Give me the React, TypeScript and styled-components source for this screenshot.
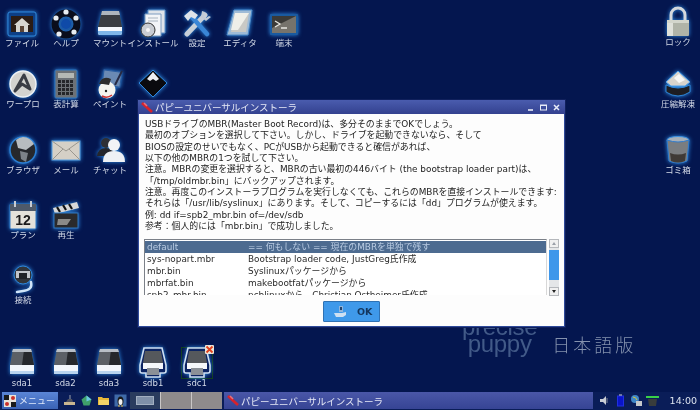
import React from "react";
import styled, { createGlobalStyle } from "styled-components";

const GlobalStyle = createGlobalStyle`
  html, body {
    margin: 0;
    padding: 0;
    background: #04164f;
  }
  body {
    font-family: "DejaVu Sans", "Noto Sans CJK JP", sans-serif;
  }
`;

// the reference is a soft, recompressed capture
const Screen = styled.div`
  width: 700px;
  height: 410px;
  overflow: hidden;
  display: flex;
  flex-direction: column;
  background: #04164f;
  filter: blur(0.35px);
`;

const Canvas = styled.div`
  position: relative;
  flex: 1;
`;

const IconSlot = styled.div<{ $cx: number; $top: number }>`
  position: absolute;
  left: ${(p) => p.$cx - 40}px;
  top: ${(p) => p.$top}px;
  width: 80px;
  display: flex;
  flex-direction: column;
  align-items: center;
`;

const IconArt = styled.svg`
  display: block;
  width: 32px;
  height: 32px;
  filter: drop-shadow(0 0 2px #2f8fe8);
`;

const IconLabel = styled.span`
  margin-top: -2px;
  font-size: 8.5px;
  line-height: 12px;
  color: #d5dbe8;
  white-space: nowrap;
`;

const Watermark = styled.div`
  position: absolute;
  left: 462px;
  top: 318px;
  display: flex;
  align-items: flex-end;
  gap: 15px;
`;

const PuppyWords = styled.div`
  display: flex;
  flex-direction: column;
  align-items: center;
  font-family: "Liberation Sans", sans-serif;
  font-size: 24px;
  line-height: 17px;
  color: #425a88;
`;

const PuppyLine = styled.span`
  letter-spacing: -0.3px;
`;

const JapaneseEdition = styled.div`
  font-family: "Noto Sans CJK JP", sans-serif;
  font-weight: 300;
  font-size: 18px;
  line-height: 16px;
  letter-spacing: 3px;
  color: #8592ae;
`;

const Installer = styled.section`
  position: absolute;
  left: 138px;
  top: 100px;
  width: 427px;
  height: 227px;
  display: flex;
  flex-direction: column;
  box-shadow: 0 0 0 1px #10205c;
`;

const TitleBar = styled.header`
  height: 14px;
  flex: none;
  display: flex;
  align-items: center;
  padding: 0 5px 0 3px;
  background: linear-gradient(#4a5cae, #33418f);
  color: #e6e9f6;
  font-size: 9.5px;
`;

const TitleText = styled.span`
  flex: 1;
  margin-left: 1px;
  white-space: nowrap;
`;

const WindowButtons = styled.div`
  display: flex;
  align-items: center;
  gap: 6px;
`;

const WindowBody = styled.div`
  flex: 1;
  display: flex;
  flex-direction: column;
  background: #fdfdfd;
  padding: 5px 5px 5px 6px;
  border: solid #2e4a9a;
  border-width: 0 1px 1px;
  box-sizing: border-box;
  min-height: 0;
`;

const Message = styled.div`
  height: 118px;
  flex: none;
  color: #222;
  font-size: 8.9px;
  line-height: 11.35px;
  white-space: nowrap;
`;

const ListRow = styled.div`
  display: flex;
  gap: 2px;
  margin: 2px 0 0 -1px;
  height: 56px;
  flex: none;
`;

const ListFrame = styled.div`
  flex: 1;
  border: 1px solid #7b8088;
  border-right-color: #d8d8d8;
  border-bottom: none;
  overflow: hidden;
  background: #fff;
  padding-top: 1px;
`;

const ListItem = styled.div<{ $selected?: boolean }>`
  display: grid;
  grid-template-columns: 101px 1fr;
  height: 12px;
  line-height: 12px;
  padding-left: 2px;
  font-size: 8.9px;
  white-space: nowrap;
  color: ${(p) => (p.$selected ? "#b9cbe2" : "#2b2b2b")};
  background: ${(p) => (p.$selected ? "#4d6b90" : "transparent")};
`;

const Scrollbar = styled.div`
  width: 10px;
  height: 57px;
  flex: none;
  display: flex;
  flex-direction: column;
  background: #e4e6e8;
`;

const ScrollArrow = styled.div<{ $up?: boolean }>`
  height: 9px;
  flex: none;
  display: flex;
  align-items: center;
  justify-content: center;
  background: #f0f0f0;
  border: 1px solid #b5b8bc;
  box-sizing: border-box;
  &::before {
    content: "";
    border-left: 2.5px solid transparent;
    border-right: 2.5px solid transparent;
    ${(p) =>
      p.$up
        ? "border-bottom: 3px solid #9aa0a8;"
        : "border-top: 3px solid #222;"}
  }
`;

const ScrollThumb = styled.div`
  height: 30px;
  margin-top: 2px;
  flex: none;
  background: #3f97ea;
`;

const ScrollGap = styled.div`
  flex: 1;
`;

const ButtonRow = styled.div`
  display: flex;
  justify-content: center;
  padding-top: 6px;
  padding-right: 1px;
`;

const OkButton = styled.div`
  width: 57px;
  height: 21px;
  box-sizing: border-box;
  display: flex;
  align-items: center;
  gap: 10px;
  padding-left: 9px;
  background: #3f99ea;
  border: 1px solid #2f72b4;
  border-radius: 1px;
  color: #13365e;
  font-size: 9.5px;
  font-weight: 700;
`;

const Taskbar = styled.footer`
  height: 18px;
  flex: none;
  display: flex;
  align-items: stretch;
  background: #0a1d58;
  padding: 0 0 1px 2px;
  box-sizing: border-box;
`;

const MenuButton = styled.div`
  width: 56px;
  display: flex;
  align-items: center;
  gap: 2px;
  padding-left: 1px;
  box-sizing: border-box;
  background: linear-gradient(#5a85d6, #3a62b4);
  color: #dfe8fa;
  font-size: 9px;
  white-space: nowrap;
`;

const QuickLaunch = styled.div`
  width: 72px;
  display: flex;
  align-items: center;
  justify-content: space-around;
  padding: 0 1px 0 3px;
  box-sizing: border-box;
`;

const TaskIcon = styled.svg`
  display: block;
  width: 13px;
  height: 13px;
`;

const Pager = styled.div`
  display: flex;
  width: 92px;
`;

const PagerSlot = styled.div<{ $active?: boolean }>`
  flex: 1;
  display: flex;
  align-items: center;
  justify-content: center;
  background: ${(p) => (p.$active ? "#2a3c5e" : "#8f8b8c")};
  border-left: ${(p) => (p.$active ? "none" : "1px solid #c9c6c6")};
  &::before {
    content: "";
    display: ${(p) => (p.$active ? "block" : "none")};
    width: 16px;
    height: 7px;
    background: #7f90a8;
    border: 1px solid #a2afc0;
  }
`;

const TaskButton = styled.div`
  width: 369px;
  margin-left: 2px;
  display: flex;
  align-items: center;
  gap: 1px;
  padding-left: 3px;
  box-sizing: border-box;
  background: linear-gradient(#4a57a8, #364494);
  color: #e6e9f6;
  font-size: 9.5px;
  white-space: nowrap;
`;

const Tray = styled.div`
  flex: 1;
  display: flex;
  align-items: center;
  gap: 3px;
  padding-left: 5px;
`;

const Clock = styled.span`
  margin-left: auto;
  margin-right: 3px;
  color: #dbe2ee;
  font-size: 9.5px;
  font-weight: 500;
`;

const Drive = ({ outlined }: { outlined?: boolean }) =>
  outlined ? (
    <>
      <path d="M7 1h18l4 17v6q0 2-2 2h-4v4H9v-4H5q-2 0-2-2v-6z" fill="#0b2362" stroke="#cfe0f2" strokeWidth="1.6" />
      <path d="M8 4h16l2 12H6z" fill="#55585c" />
      <rect x="6" y="16" width="20" height="6" fill="#f5f7fa" />
      <rect x="10" y="21" width="12" height="7" fill="#8b9097" />
    </>
  ) : (
    <>
      <path d="M7 2h18l3 16H4z" fill="#5c6066" />
      <path d="M18 3h7l3 15h-12z" fill="#26282c" />
      <path d="M7 2h18l1 3H6z" fill="#b8bec6" />
      <path d="M4 18h24v8q0 1-1 1H5q-1 0-1-1z" fill="#f3f6fb" />
      <path d="M4 24h24v2q0 1-1 1H5q-1 0-1-1z" fill="#b9d4ee" />
    </>
  );

const arts: Record<string, React.ReactNode> = {
  file: (
    <>
      <rect x="2" y="5" width="28" height="24" rx="2" fill="#0d3f86" stroke="#2f86d8" />
      <rect x="5" y="9" width="22" height="16" fill="#2b1d16" />
      <path d="M16 11l8 7h-2v7H10v-7H8z" fill="#d7d5d0" />
      <rect x="14" y="19" width="4" height="6" fill="#5a4436" />
    </>
  ),
  help: (
    <>
      <circle cx="16" cy="17" r="11" fill="none" stroke="#0a0d1c" strokeWidth="7" />
      <circle cx="16" cy="17" r="5" fill="#0f4aa8" />
      {[[16, 5], [26, 11], [24, 25], [9, 27], [6, 11]].map(([x, y]) => (
        <circle key={`${x}-${y}`} cx={x} cy={y} r="2.6" fill="#e8edf2" />
      ))}
    </>
  ),
  mount: (
    <>
      <path d="M8 4h17l3 16H4z" fill="#3a3d42" />
      <path d="M8 4h17l1 4H7z" fill="#aeb5bd" />
      <path d="M4 20h24v6q0 2-2 2H6q-2 0-2-2z" fill="#f4f7fb" />
      <path d="M4 24h24v2q0 2-2 2H6q-2 0-2-2z" fill="#7fb6e8" />
    </>
  ),
  install: (
    <>
      <path d="M11 3h17v23H11z" fill="#dfe4ea" stroke="#5f8fc4" />
      <path d="M8 7h16v22H8z" fill="#f3f5f8" stroke="#7c9cc0" />
      <path d="M11 11h10M11 14h10" stroke="#a9b4c0" />
      <circle cx="11" cy="23" r="7" fill="#c8ccd2" stroke="#333" />
      <circle cx="11" cy="23" r="2" fill="#f7f7f7" />
    </>
  ),
  settings: (
    <>
      <path d="M6 27L24 8" stroke="#c8d0d8" strokeWidth="5" strokeLinecap="round" />
      <path d="M26 27L11 10" stroke="#3a86d6" strokeWidth="4.5" strokeLinecap="round" />
      <path d="M3 9l7-6 7 5-3 4-4-2-3 4z" fill="#dfe4e9" />
      <path d="M21 4l-1 6 5 4 5-4-2-1-3 2-2-2 1-4z" fill="#c3ccd6" />
    </>
  ),
  editor: (
    <>
      <path d="M10 3h18l-4 25H3z" fill="#9fbbd6" stroke="#4c8ac8" />
      <path d="M11 6h14l-3 19H7z" fill="#c9c9c5" />
      <path d="M11 6h14L14 23H7z" fill="#efefe9" />
    </>
  ),
  terminal: (
    <>
      <rect x="2" y="7" width="28" height="21" rx="1" fill="#1a5aa0" />
      <rect x="4" y="9" width="24" height="17" fill="#76736c" />
      <path d="M4 9h24L4 21z" fill="#3b3a37" />
      <path d="M7 14l5 3-5 3M13 21h6" stroke="#e6e6e0" strokeWidth="1.3" fill="none" />
    </>
  ),
  word: (
    <>
      <circle cx="16" cy="16" r="13" fill="#d3d3cf" stroke="#eef1f4" strokeWidth="1.5" />
      <path d="M8 23L17 7l6 14-8-5z" fill="none" stroke="#3a3d44" strokeWidth="3" strokeLinejoin="round" />
    </>
  ),
  calc: (
    <>
      <rect x="5" y="2" width="22" height="28" rx="1" fill="#6c7176" stroke="#2f76c0" />
      <rect x="8" y="5" width="16" height="5" fill="#b4b8b4" />
      {[12, 16, 20, 24].flatMap((y) =>
        [8, 12, 16, 20].map((x) => <rect key={`${x}${y}`} x={x} y={y} width="3" height="3" fill="#24262a" />)
      )}
    </>
  ),
  paint: (
    <>
      <rect x="9" y="3" width="18" height="15" fill="#6a8ab4" stroke="#2a5ca0" transform="rotate(8 18 10)" />
      <path d="M28 3L21 17" stroke="#262a44" strokeWidth="2" />
      <circle cx="13" cy="22" r="8.5" fill="#f4f4ef" />
      <path d="M5 16q3-9 12-5l-2 6-6-1z" fill="#2d2d2d" />
      <circle cx="12" cy="23" r="1.2" fill="#222" />
      <path d="M8 28q5 3 10-1" stroke="#c33" strokeWidth="1.5" fill="none" />
    </>
  ),
  inkscape: (
    <>
      <path d="M16 2L30 15 16 29 2 15z" fill="#0a0a0e" stroke="#2d86dc" />
      <path d="M16 4l6 7-3 2-3-2-3 2-3-2z" fill="#eef0f2" />
    </>
  ),
  browser: (
    <>
      <circle cx="16" cy="16" r="13" fill="#26282c" stroke="#2c7fd4" strokeWidth="1.5" />
      <path d="M16 3a13 13 0 0 1 11 7l-8 6-8-2-2-8a13 13 0 0 1 7-3z" fill="#b7bcc0" />
      <path d="M13 17l8 2-2 9-5-3z" fill="#7d8288" />
    </>
  ),
  mail: (
    <>
      <rect x="2" y="7" width="28" height="19" fill="#d5d0c6" stroke="#5a9ede" />
      <path d="M2 7l14 10L30 7M2 26l11-11M30 26L19 15" stroke="#9a978f" fill="none" />
    </>
  ),
  chat: (
    <>
      <circle cx="12" cy="9" r="5" fill="#2e3036" />
      <path d="M3 22q1-8 9-8t8 8z" fill="#24262c" />
      <circle cx="20" cy="11" r="6" fill="#f2f4f7" />
      <path d="M9 28q0-11 11-11t11 11z" fill="#eef1f5" />
    </>
  ),
  plan: (
    <>
      <rect x="3" y="5" width="26" height="25" rx="1" fill="#e4e2da" stroke="#2f76c0" />
      <rect x="3" y="5" width="26" height="7" fill="#4e5a6a" />
      <path d="M8 2v6M24 2v6" stroke="#c6ccd4" strokeWidth="2" />
      <text x="16" y="26" textAnchor="middle" fontSize="14" fontWeight="700" fontFamily="Liberation Sans, sans-serif" fill="#1a1a1a">12</text>
    </>
  ),
  play: (
    <>
      <path d="M3 9L27 3l2 6L5 15z" fill="#d8d8d8" />
      <path d="M7 8l3 5M13 6l3 5M19 5l3 5" stroke="#111" strokeWidth="2.2" />
      <rect x="4" y="14" width="24" height="15" fill="#2a2a2c" stroke="#2f76c0" />
      <path d="M8 20h13l-4 6H7z" fill="#8a8a88" />
    </>
  ),
  connect: (
    <>
      <circle cx="16" cy="11" r="9" fill="#30343a" stroke="#2f86d8" />
      <path d="M9 7h14v7H9z" fill="#c2c6ca" />
      <rect x="12" y="9" width="8" height="6" fill="#1f2226" />
      <path d="M24 18q2 8-8 9l-6 1" stroke="#cfe4f8" strokeWidth="2.5" fill="none" strokeLinecap="round" />
    </>
  ),
  lock: (
    <>
      <path d="M9 15V9a7 7 0 0 1 14 0v6" fill="none" stroke="#d4d8dc" strokeWidth="3" />
      <rect x="5" y="14" width="22" height="16" rx="1" fill="#b0b4a8" />
      <rect x="5" y="14" width="6" height="16" fill="#dfe1da" />
      <rect x="5" y="14" width="22" height="3" fill="#d3d6cc" />
    </>
  ),
  archive: (
    <>
      <path d="M4 14L16 3l12 11-5 4H9z" fill="#d8d4cc" stroke="#4fa0ea" />
      <path d="M12 10l5-4 6 6-6 3z" fill="#f7f7f4" />
      <path d="M4 17q12 6 24 0v7q-12 8-24 0z" fill="#1d1d22" stroke="#2f86d8" />
    </>
  ),
  trash: (
    <>
      <ellipse cx="16" cy="6" rx="11" ry="3.5" fill="#a8b0b8" stroke="#3f90e0" />
      <path d="M5 6l2 21q9 4 18 0l2-21q-11 4-22 0z" fill="#7a7d80" stroke="#2f7cce" />
      <path d="M8 19q8 3 16 0l-1 8q-7 3-14 0z" fill="#3f3a36" />
    </>
  ),
};

const KillMark = styled.svg`
  position: absolute;
  left: 48px;
  top: -2px;
  width: 9px;
  height: 9px;
`;

const DriveFrame = styled.div`
  position: relative;
  outline: 1px solid #12401f;
  outline-offset: -1px;
`;

type DesktopIcon = { label?: string; art: string; cx: number; top: number };

const desktopIcons: DesktopIcon[] = [
  { label: "ファイル", art: "file", cx: 22, top: 7 },
  { label: "ヘルプ", art: "help", cx: 66, top: 7 },
  { label: "マウント", art: "mount", cx: 110, top: 7 },
  { label: "インストール", art: "install", cx: 153, top: 7 },
  { label: "設定", art: "settings", cx: 197, top: 7 },
  { label: "エディタ", art: "editor", cx: 240, top: 7 },
  { label: "端末", art: "terminal", cx: 284, top: 7 },
  { label: "ワープロ", art: "word", cx: 23, top: 68 },
  { label: "表計算", art: "calc", cx: 66, top: 68 },
  { label: "ペイント", art: "paint", cx: 110, top: 68 },
  { art: "inkscape", cx: 153, top: 68 },
  { label: "ブラウザ", art: "browser", cx: 23, top: 134 },
  { label: "メール", art: "mail", cx: 66, top: 134 },
  { label: "チャット", art: "chat", cx: 110, top: 134 },
  { label: "プラン", art: "plan", cx: 23, top: 199 },
  { label: "再生", art: "play", cx: 66, top: 199 },
  { label: "接続", art: "connect", cx: 23, top: 264 },
  { label: "ロック", art: "lock", cx: 678, top: 6 },
  { label: "圧縮解凍", art: "archive", cx: 678, top: 68 },
  { label: "ゴミ箱", art: "trash", cx: 678, top: 134 },
];

const messageLines = [
  "USBドライブのMBR(Master Boot Record)は、多分そのままでOKでしょう。",
  "最初のオプションを選択して下さい。しかし、ドライブを起動できないなら、そして",
  "BIOSの設定のせいでもなく、PCがUSBから起動できると確信があれば、",
  "以下の他のMBRの1つを試して下さい。",
  "注意。MBRの変更を選択すると、MBRの古い最初の446バイト (the bootstrap loader part)は、",
  "「/tmp/oldmbr.bin」にバックアップされます。",
  "注意。再度このインストーラプログラムを実行しなくても、これらのMBRを直接インストールできます:",
  "それらは「/usr/lib/syslinux」にあります。そして、コピーするには「dd」プログラムが使えます。",
  "例: dd if=spb2_mbr.bin of=/dev/sdb",
  "参考：個人的には「mbr.bin」で成功しました。",
];

const mbrOptions = [
  ["default", "== 何もしない == 現在のMBRを単独で残す"],
  ["sys-nopart.mbr", "Bootstrap loader code, JustGreg氏作成"],
  ["mbr.bin", "Syslinuxパッケージから"],
  ["mbrfat.bin", "makebootfatパッケージから"],
  ["spb2_mbr.bin", "pcblinuxから、Christian Ostheimer氏作成"],
];

const PuppyX = () => (
  <svg width="13" height="11" viewBox="0 0 13 11">
    <path d="M1 1l10 9" stroke="#d8222a" strokeWidth="2.6" />
    <path d="M3 1l3 3" stroke="#e8707a" strokeWidth="1.6" />
  </svg>
);

export default function App() {
  return (
    <Screen>
      <GlobalStyle />
      <Canvas>
        <Watermark>
          <PuppyWords>
            <PuppyLine>precise</PuppyLine>
            <PuppyLine>puppy</PuppyLine>
          </PuppyWords>
          <JapaneseEdition>日本語版</JapaneseEdition>
        </Watermark>

        {desktopIcons.map((icon) => (
          <IconSlot key={icon.art} $cx={icon.cx} $top={icon.top}>
            <IconArt viewBox="0 0 32 32">{arts[icon.art]}</IconArt>
            {icon.label && <IconLabel>{icon.label}</IconLabel>}
          </IconSlot>
        ))}

        {["sda1", "sda2", "sda3"].map((name, i) => (
          <IconSlot key={name} $cx={22 + i * 43.5} $top={347}>
            <IconArt viewBox="0 0 32 32">
              <Drive />
            </IconArt>
            <IconLabel>{name}</IconLabel>
          </IconSlot>
        ))}
        <IconSlot $cx={153} $top={347}>
          <IconArt viewBox="0 0 32 32">
            <Drive outlined />
          </IconArt>
          <IconLabel>sdb1</IconLabel>
        </IconSlot>
        <IconSlot $cx={197} $top={347}>
          <DriveFrame>
            <IconArt viewBox="0 0 32 32">
              <Drive outlined />
            </IconArt>
          </DriveFrame>
          <KillMark viewBox="0 0 9 9">
            <rect width="9" height="9" rx="1" fill="#ece4d8" />
            <path d="M1.5 1.5l6 6M7.5 1.5l-6 6" stroke="#e0401c" strokeWidth="1.8" />
          </KillMark>
          <IconLabel>sdc1</IconLabel>
        </IconSlot>

        <Installer>
          <TitleBar>
            <PuppyX />
            <TitleText>パピーユニバーサルインストーラ</TitleText>
            <WindowButtons>
              <svg width="7" height="7" viewBox="0 0 7 7">
                <path d="M1 6h5" stroke="#e8ecf8" strokeWidth="1.6" />
              </svg>
              <svg width="7" height="7" viewBox="0 0 7 7">
                <rect x="0.5" y="1" width="6" height="5" fill="none" stroke="#e8ecf8" />
                <path d="M0 1.5h7" stroke="#e8ecf8" />
              </svg>
              <svg width="7" height="7" viewBox="0 0 7 7">
                <path d="M1 1l5 5M6 1L1 6" stroke="#e8ecf8" strokeWidth="1.5" />
              </svg>
            </WindowButtons>
          </TitleBar>
          <WindowBody>
            <Message>
              {messageLines.map((line) => (
                <div key={line}>{line}</div>
              ))}
            </Message>
            <ListRow>
              <ListFrame>
                {mbrOptions.map(([file, note], i) => (
                  <ListItem key={file} $selected={i === 0}>
                    <span>{file}</span>
                    <span>{note}</span>
                  </ListItem>
                ))}
              </ListFrame>
              <Scrollbar>
                <ScrollArrow $up />
                <ScrollThumb />
                <ScrollGap />
                <ScrollArrow />
              </Scrollbar>
            </ListRow>
            <ButtonRow>
              <OkButton>
                <svg width="14" height="13" viewBox="0 0 14 13">
                  <path d="M1 8h8l4-1v3l-3 2H3z" fill="#cfe0f2" />
                  <path d="M6 1h4v6H6z" fill="#8fb4dc" />
                  <path d="M7 2h2v3H7z" fill="#24456e" />
                </svg>
                OK
              </OkButton>
            </ButtonRow>
          </WindowBody>
        </Installer>
      </Canvas>

      <Taskbar>
        <MenuButton>
          <svg width="14" height="14" viewBox="0 0 14 14">
            <rect x="1" y="1" width="12" height="12" fill="#e8e4dc" />
            <path d="M1 1h5v5H1zM8 8h5v5H8z" fill="#1a1a1a" />
            <circle cx="10" cy="4" r="2" fill="#c9302a" />
            <circle cx="4" cy="10" r="2" fill="#c9302a" />
          </svg>
          メニュー
        </MenuButton>
        <QuickLaunch>
          <TaskIcon viewBox="0 0 13 13">
            <rect x="1" y="8" width="11" height="3" fill="#c9b690" />
            <path d="M3 8l2-3h4l1 3z" fill="#4c5060" />
            <path d="M7 1v4" stroke="#9aa0aa" />
          </TaskIcon>
          <TaskIcon viewBox="0 0 13 13">
            <path d="M6.5 1.5l5 4-2 6h-6l-2-6z" fill="#3fa06a" />
            <path d="M6.5 1.5l5 4-5 2z" fill="#6ac8e0" />
          </TaskIcon>
          <TaskIcon viewBox="0 0 13 13">
            <path d="M1 3h4l1 1h6v7H1z" fill="#e8b838" />
            <path d="M2 6h10v5H2z" fill="#f4d468" />
          </TaskIcon>
          <TaskIcon viewBox="0 0 13 13">
            <rect x="0.5" y="0.5" width="12" height="12" fill="#3f6aa8" />
            <ellipse cx="6.5" cy="7" rx="3" ry="4.5" fill="#1a1a1a" />
            <ellipse cx="6.5" cy="8" rx="2" ry="3" fill="#f2f2f2" />
            <path d="M4 12h2M7 12h2" stroke="#e8b838" strokeWidth="1.2" />
          </TaskIcon>
        </QuickLaunch>
        <Pager>
          <PagerSlot $active />
          <PagerSlot />
          <PagerSlot />
        </Pager>
        <TaskButton>
          <PuppyX />
          パピーユニバーサルインストーラ
        </TaskButton>
        <Tray>
          <TaskIcon viewBox="0 0 13 13">
            <path d="M2 5h3l3-3v9L5 8H2z" fill="#c8ccd4" />
            <path d="M9 4v5" stroke="#7d8494" />
          </TaskIcon>
          <TaskIcon viewBox="0 0 13 13">
            <rect x="3.5" y="2" width="6" height="10" fill="#0a14c8" stroke="#2030e0" />
            <path d="M5 1h3" stroke="#ccd" />
          </TaskIcon>
          <TaskIcon viewBox="0 0 13 13">
            <circle cx="5" cy="5" r="4" fill="#3f86c8" />
            <path d="M3 3q3 0 4 3" stroke="#d8c838" fill="none" />
            <rect x="6" y="7" width="6" height="5" fill="#c6c8cc" />
          </TaskIcon>
          <TaskIcon viewBox="0 0 13 13">
            <rect x="0" y="2" width="13" height="2" fill="#38d048" />
            <path d="M2 5h9l-1 7H3z" fill="#383c3c" />
          </TaskIcon>
          <Clock>14:00</Clock>
        </Tray>
      </Taskbar>
    </Screen>
  );
}
